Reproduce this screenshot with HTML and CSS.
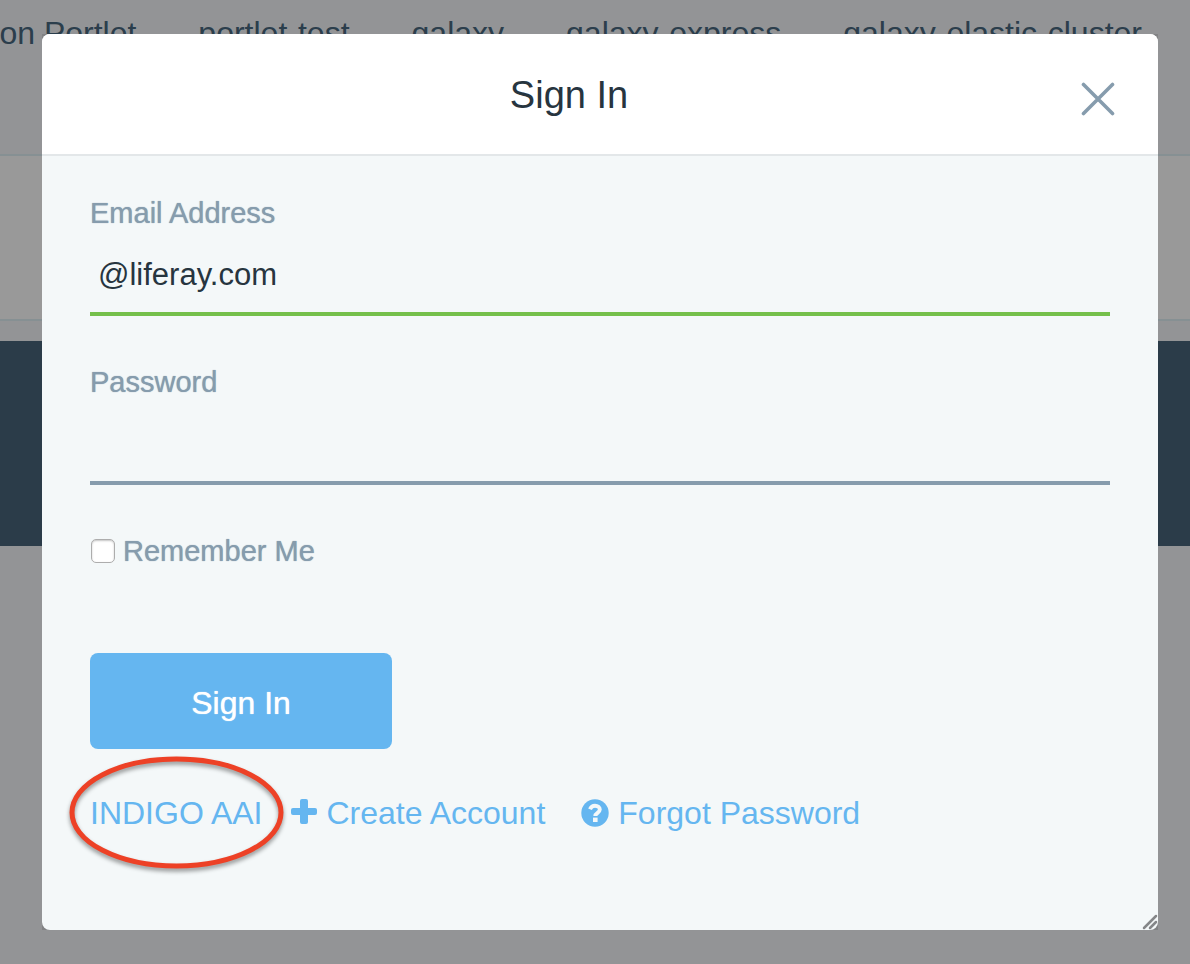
FILE: index.html
```html
<!DOCTYPE html>
<html lang="en">
<head>
<meta charset="utf-8">
<meta name="viewport" content="width=device-width, initial-scale=1">
<title>Sign In</title>
<link rel="stylesheet" href="styles.css">
</head>
<body>
<div class="page">
  <nav class="site-nav">
    <a href="#">on Portlet</a>
    <a href="#">portlet-test</a>
    <a href="#">galaxy</a>
    <a href="#">galaxy-express</a>
    <a href="#">galaxy-elastic-cluster</a>
  </nav>
  <div class="toolbar"></div>
  <div class="banner"></div>
</div>
<div class="backdrop">
  <div class="frame">
    <section class="modal" role="dialog" aria-labelledby="modal-title">
      <header class="modal-header">
        <h1 class="modal-title" id="modal-title">Sign In</h1>
        <button class="close" type="button" aria-label="Close">
          <svg width="34" height="34" viewBox="0 0 34 34" fill="none" stroke="#869cad" stroke-width="3.600" stroke-linecap="round"><path d="M2.500 2.500l29 29M31.500 2.500l-29 29"/></svg>
        </button>
      </header>
      <form class="modal-body">
        <div class="field">
          <label class="label" for="email">Email Address</label>
          <input class="input input-valid" id="email" type="text" value="@liferay.com">
        </div>
        <div class="field">
          <label class="label" for="password">Password</label>
          <input class="input" id="password" type="password">
        </div>
        <div class="remember">
          <input class="checkbox" id="remember" type="checkbox">
          <label class="label" for="remember">Remember Me</label>
        </div>
        <button class="submit" type="submit">Sign In</button>
        <div class="links">
          <a class="link link-marked" href="#">INDIGO AAI<svg class="marker" width="222" height="122" viewBox="0 0 222 122" fill="none"><ellipse cx="108.500" cy="59.500" rx="104.500" ry="53.500" stroke="#ed4126" stroke-width="5"/></svg></a>
          <a class="link" href="#">
            <svg class="icon-plus" width="26" height="26" viewBox="0 0 26 26" fill="#65b6f0"><path d="M11 0h4a2 2 0 0 1 2 2v7h7a2 2 0 0 1 2 2v3a2 2 0 0 1-2 2h-7v7a2 2 0 0 1-2 2h-4a2 2 0 0 1-2-2v-7H2a2 2 0 0 1-2-2v-3a2 2 0 0 1 2-2h7V2a2 2 0 0 1 2-2z"/></svg>
            Create Account</a>
          <a class="link" href="#">
            <svg width="28" height="28" viewBox="0 0 28 28"><circle cx="14" cy="14" r="13.700" fill="#65b6f0"/><path d="M9 10.300c1-2.500 2.600-3.600 5-3.600 2.700 0 4.800 1.600 4.800 3.900 0 3.200-4.500 3.200-4.500 6.400" fill="none" stroke="#f4f8f9" stroke-width="3.900"/><path d="M12 18.600h4.600v4.400h-4.600z" fill="#f4f8f9"/></svg>
            Forgot Password</a>
        </div>
      </form>
      <svg class="grip" width="16" height="16" viewBox="0 0 16 16" stroke="#858789" stroke-width="2.500" stroke-linecap="round"><path d="M2 14L14 2M8 14l6-6"/></svg>
    </section>
  </div>
</div>
</body>
</html>
```
FILE: styles.css
```css
* {
  box-sizing: border-box;
}

body {
  margin: 0;
  background: #f5f7fa;
  color: #27353f;
  font-family: "Liberation Sans", Arial, sans-serif;
  font-size: 32px;
}

a {
  text-decoration: none;
}

button,
input {
  margin: 0;
  font-family: inherit;
}

.page {
  min-height: 100vh;
  overflow: hidden;
}

.site-nav {
  display: flex;
  justify-content: flex-end;
  gap: 62px;
  height: 156px;
  padding: 13px 48px 0 0;
  border-bottom: 2px solid #dff0f5;
  line-height: 40px;
  white-space: nowrap;
}

.site-nav a {
  color: #48687f;
}

.toolbar {
  height: 165px;
  margin-bottom: 20px;
  background: #ffffff;
  border-bottom: 2px solid #dff0f5;
}

.banner {
  height: 205px;
  background: #48647a;
}

.backdrop {
  position: fixed;
  inset: 0;
  display: flex;
  padding: 34px 32px 34px 42px;
  background: rgba(0, 0, 0, 0.4);
}

.frame {
  display: flex;
  flex: 1;
  background: #828385;
}

.modal {
  position: relative;
  flex: 1;
  overflow: hidden;
  border-radius: 8px;
  background: #f4f8f9;
}

.modal-header {
  display: flex;
  align-items: center;
  height: 122px;
  padding: 0 43px 0 48px;
  background: #ffffff;
  border-bottom: 2px solid #e3e7e9;
}

.modal-title {
  flex: 1;
  margin: 0;
  padding-top: 2px;
  font-size: 38px;
  font-weight: 400;
  line-height: 44px;
  text-align: center;
}

.close {
  display: flex;
  justify-content: flex-end;
  width: 67px;
  padding: 10px 0 0;
  border: 0;
  background: none;
}

.modal-body {
  padding: 41px 48px;
}

.field {
  margin-bottom: 50px;
}

.label {
  display: block;
  color: #869cad;
  font-size: 29px;
  font-weight: 500;
  line-height: 32px;
  text-shadow: 0 0 1px #869cad;
}

.input {
  display: block;
  width: 100%;
  height: 87px;
  padding: 9px 8px 0;
  border: 0;
  border-bottom: 4px solid #869cad;
  outline: 0;
  background: none;
  color: #27353f;
  font-size: 31px;
}

.input-valid {
  border-bottom-color: #75c04b;
}

.remember {
  display: flex;
  align-items: center;
  gap: 8px;
  margin-bottom: 86px;
}

.checkbox {
  width: 24px;
  height: 24px;
  margin-left: 1px;
  appearance: none;
  border: 1px solid #adadad;
  border-radius: 5px;
  background: #ffffff;
  box-shadow: inset 0 1px 2px #c4c4c4;
}

.submit {
  display: block;
  width: 302px;
  height: 96px;
  padding: 4px 0 0;
  border: 0;
  border-radius: 8px;
  background: #65b6f0;
  color: #ffffff;
  font-size: 32px;
  font-weight: 500;
  text-shadow: 0 0 1px #ffffff;
}

.links {
  display: flex;
  gap: 36px;
  margin-top: 44px;
  line-height: 40px;
  white-space: nowrap;
}

.link {
  display: flex;
  align-items: center;
  gap: 9px;
  color: #65b6f0;
}

.link-marked {
  position: relative;
  margin-right: -7px;
}

.icon-plus {
  margin-bottom: 2px;
}

.marker {
  position: absolute;
  top: -40px;
  left: -22px;
  filter: drop-shadow(0 3px 2px rgba(0, 0, 0, 0.4));
  pointer-events: none;
}

.grip {
  position: absolute;
  right: 0;
  bottom: 0;
}
```
